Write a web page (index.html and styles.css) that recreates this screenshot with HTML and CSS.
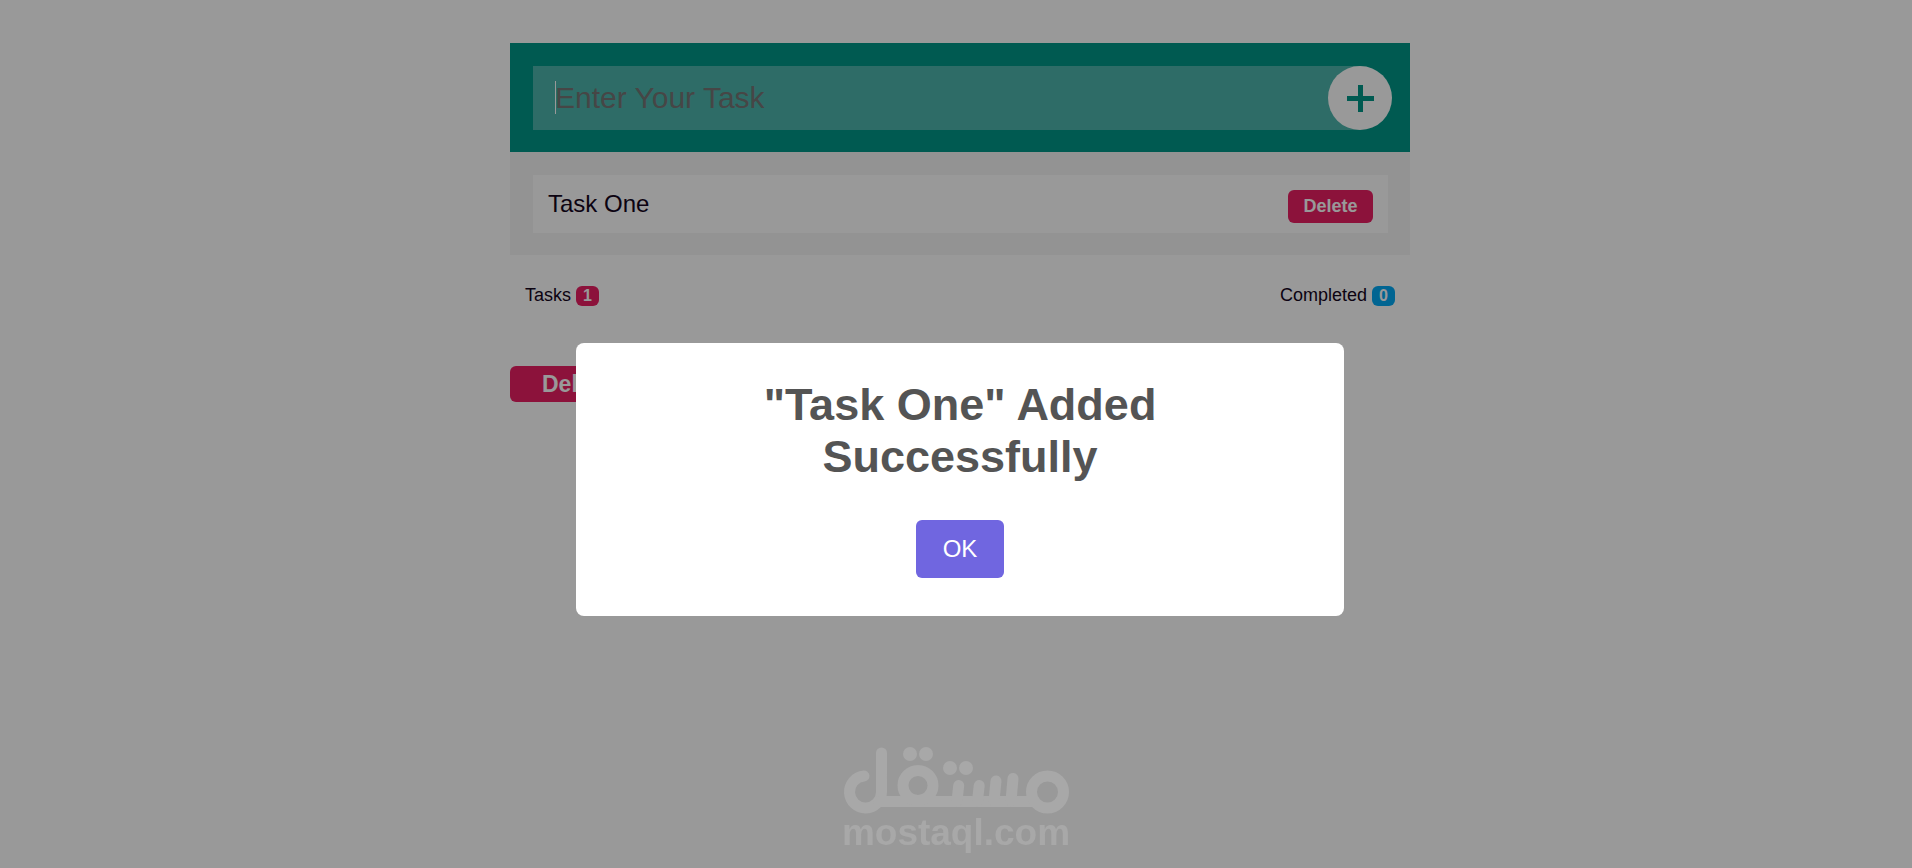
FILE: index.html
```
<!DOCTYPE html>
<html lang="en">
<head>
  <meta charset="UTF-8">
  <title>Todo App</title>
  <meta name="viewport" content="width=device-width, initial-scale=1">
  <link rel="stylesheet" href="styles.css">
</head>
<body>
  <div class="todo-container">
    <form class="add-task">
      <input type="text" class="task-input" placeholder="Enter Your Task" aria-label="Task">
      <span class="caret"></span>
      <button type="button" class="plus" aria-label="Add task">
        <svg viewBox="0 0 27 27" width="27" height="27"><path d="M0 13.5h27M13.5 0v27" stroke="currentColor" stroke-width="5"/></svg>
      </button>
    </form>
    <div class="tasks-content">
      <div class="task-box">
        <span>Task One</span>
        <button type="button" class="delete">Delete</button>
      </div>
    </div>
    <div class="task-stats">
      <div class="tasks-count">Tasks <span>1</span></div>
      <div class="tasks-completed">Completed <span>0</span></div>
    </div>
    <button type="button" class="delete-all">Delete All</button>
  </div>

  <div class="overlay">
    <div class="popup" role="dialog" aria-labelledby="popupTitle">
      <h2 id="popupTitle">"Task One" Added Successfully</h2>
      <button type="button" class="confirm">OK</button>
    </div>
  </div>

  <div class="watermark">
    <svg viewBox="0 0 226 67" width="226" height="67" fill="none" stroke="currentColor" stroke-width="11" stroke-linecap="round">
      <path d="M21 29a16 16 0 1 0 17.5 16V6"/>
      <path d="M36 54.5h155"/>
      <circle cx="75" cy="38.5" r="15"/>
      <circle cx="204.500" cy="45" r="16"/>
      <path d="M114 54l1.700-15.500M134.500 54l1.700-15.500M151 54l2-20M168 54l2-22.500"/>
      <g fill="currentColor" stroke="none">
        <circle cx="67" cy="7" r="7"/>
        <circle cx="83" cy="7" r="7"/>
        <circle cx="107" cy="21" r="7"/>
        <circle cx="123" cy="21" r="7"/>
      </g>
    </svg>
    <span>mostaql.com</span>
  </div>
</body>
</html>
```
FILE: styles.css
```
* {
  box-sizing: border-box;
}
body {
  margin: 0;
  padding: 43px 0 0 8px;
  font-family: Arial, "Liberation Sans", sans-serif;
  font-size: 18px;
  color: #14051d;
  background-color: white;
}
button, input {
  font-family: inherit;
  border: none;
}
.todo-container {
  max-width: 900px;
  margin: 0 auto;
}
.add-task {
  position: relative;
  display: flex;
  padding: 23px 18px 22px 23px;
  background-color: #009688;
}
.task-input {
  flex: 1;
  height: 64px;
  margin-right: -32px;
  padding: 0 22px;
  font-size: 30px;
  color: white;
  background-color: rgba(255, 255, 255, 0.3);
  outline: none;
}
.task-input::placeholder {
  color: #757575;
}
.caret {
  position: absolute;
  top: 38px;
  left: 45px;
  width: 1px;
  height: 33px;
  background-color: white;
}
.plus {
  position: relative;
  display: flex;
  align-items: center;
  justify-content: center;
  width: 64px;
  height: 64px;
  padding: 0;
  border-radius: 50%;
  color: #009688;
  background-color: white;
}
.tasks-content {
  padding: 23px 22px 22px 23px;
  background-color: #f5f5f5;
}
.task-box {
  display: flex;
  justify-content: space-between;
  padding: 15px;
  font-size: 24px;
  line-height: 28px;
  background-color: white;
}
.delete {
  min-width: 85px;
  height: 33px;
  margin-bottom: -5px;
  padding: 0 15px;
  font-size: 18px;
  font-weight: bold;
  color: white;
  background-color: #e91e63;
  border-radius: 6px;
}
.task-stats {
  display: flex;
  justify-content: space-between;
  padding: 30px 15px;
  line-height: 21px;
}
.task-stats span {
  display: inline-block;
  padding: 1px 7px;
  font-size: 16px;
  font-weight: bold;
  line-height: 18px;
  color: white;
  background-color: #e91e63;
  border-radius: 6px;
}
.task-stats .tasks-completed span {
  background-color: #03a9f4;
}
.delete-all {
  height: 36px;
  margin-top: 30px;
  padding: 0 32px;
  font-size: 23px;
  font-weight: bold;
  color: white;
  background-color: #e91e63;
  border-radius: 6px;
}
.overlay {
  position: fixed;
  inset: 0;
  z-index: 10;
  display: flex;
  align-items: center;
  justify-content: center;
  padding: 90px 0 0 8px;
  background-color: rgba(0, 0, 0, 0.4);
}
.popup {
  width: 768px;
  max-width: 100%;
  padding: 36px 60px 38px;
  text-align: center;
  background-color: white;
  border-radius: 8px;
}
.popup h2 {
  margin: 0 0 37px;
  font-size: 45px;
  line-height: 52px;
  color: #545454;
}
.confirm {
  height: 58px;
  padding: 0 27px;
  font-size: 24px;
  color: white;
  background-color: #7066e0;
  border-radius: 6px;
  vertical-align: top;
}
.watermark {
  position: fixed;
  right: 0;
  bottom: 17px;
  left: 0;
  z-index: 11;
  display: flex;
  flex-direction: column;
  align-items: center;
  font-size: 37px;
  font-weight: bold;
  line-height: 37px;
  color: #a8a8a8;
}
```
